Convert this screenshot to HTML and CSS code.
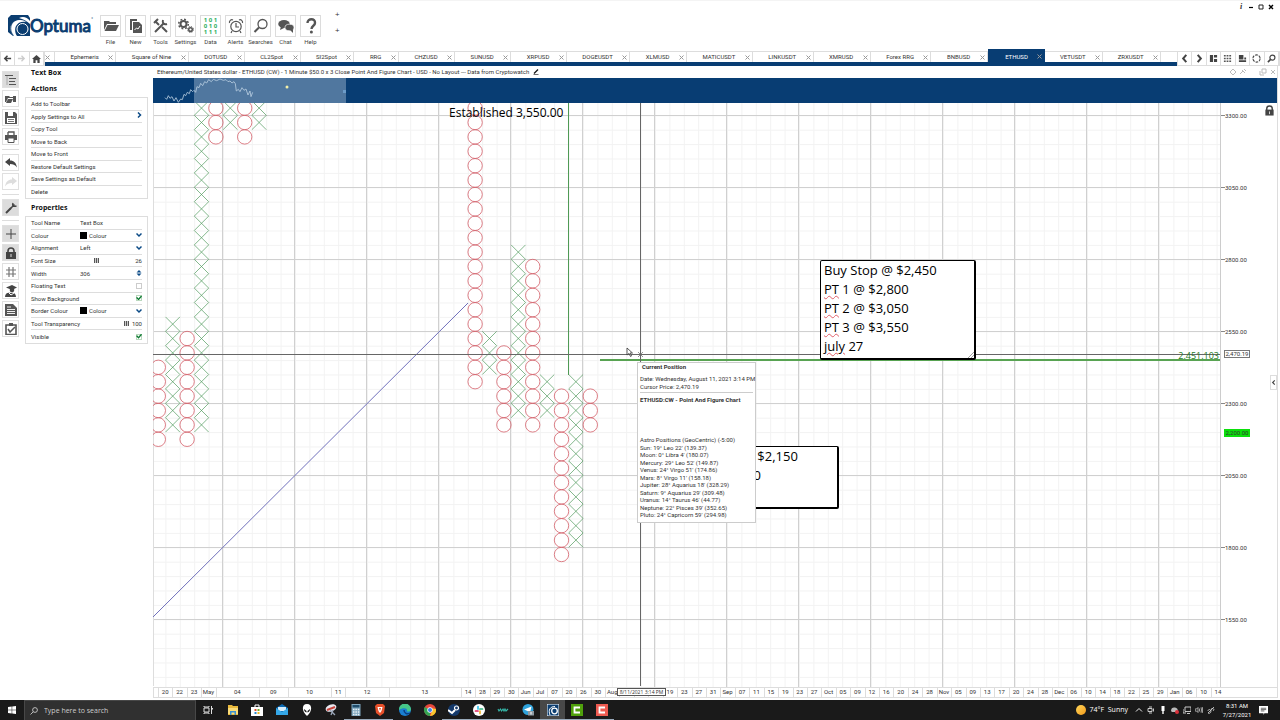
FILE: index.html
```html
<!DOCTYPE html>
<html lang="en">
<head>
    <meta charset="UTF-8">
    <meta name="viewport" content="width=device-width, initial-scale=1.0">
    <title>Optuma - ETHUSD</title>
    <link rel="stylesheet" href="styles.css">
</head>
<body>

<!-- Header -->
<header class="header">
    <div class="logo">
        <svg width="22" height="22" viewBox="0 0 22 22"><path d="M3 0h17l2 3v18H5L0 17V3z" fill="#0b3d70"/><path d="M6 21C-1 14 3 6 11 5c4-.5 6 1 8 2-5-1-9 0-11 4-1.500 3-1 7 1 10z" fill="#fff"/><path d="M11 3c4-2 8-1 11 3v3c-3-3-7-5-11-6z" fill="#fff"/><circle cx="14.500" cy="14" r="5.500" fill="#0b3d70" stroke="#fff"/><path d="M5 20c-3-4-3-9 0-13" fill="none" stroke="#0b3d70" stroke-width=".8"/></svg>
        <span class="logo-text">Optuma</span><span class="logo-mark">°</span>
    </div>
    <nav class="toolbar">
        <button class="tool"><span class="tool-icon"><svg viewBox="0 0 16 16"><path d="M1 3h5l1 1h6v2H4L1 12z"/><path d="M4.500 7H16l-3 6H1.500z"/></svg></span>File</button>
        <button class="tool"><span class="tool-icon"><svg viewBox="0 0 16 16"><path d="M2 1h7v2H4v9H2z"/><path d="M5 4h6l3 3v8H5z"/><path d="M6.500 12l2-2 1.500 1 2-3" stroke="#fff" fill="none"/></svg></span>New</button>
        <button class="tool"><span class="tool-icon"><svg viewBox="0 0 16 16" fill="none" stroke="#555" stroke-width="2"><path d="M2 14l9-9M2 3l4 4M9 9l5 5"/><path d="M1 5l4-4M10 2c-1 3 1 5 4 4"/></svg></span>Tools</button>
        <button class="tool"><span class="tool-icon"><svg viewBox="0 0 16 16" fill="none" stroke="#555"><circle cx="5.500" cy="6" r="3" stroke-width="2"/><circle cx="5.500" cy="6" r="4.800" stroke-width="1.500" stroke-dasharray="1.900 1.870"/><circle cx="12.500" cy="11.500" r="1.800" stroke-width="1.500"/><circle cx="12.500" cy="11.500" r="3" stroke-dasharray="1.200 1.150"/></svg></span>Settings</button>
        <button class="tool"><span class="tool-icon data-icon"><span>1 0 1</span><span>0 1 0</span><span>1 1 1</span></span>Data</button>
        <button class="tool"><span class="tool-icon"><svg viewBox="0 0 16 16" fill="none" stroke="#555" stroke-width="1.200"><circle cx="8" cy="8.500" r="5.200"/><path d="M8 5v4h3M1.500 5C1 3 3 1 5 2M14.500 5C15 3 13 1 11 2M4 13l-1 2M12 13l1 2"/></svg></span>Alerts</button>
        <button class="tool"><span class="tool-icon"><svg viewBox="0 0 16 16" fill="none" stroke="#555"><circle cx="9.500" cy="6" r="4.500" stroke-width="1.300"/><path d="M6 9.500L1.500 14" stroke-width="2"/></svg></span>Searches</button>
        <button class="tool"><span class="tool-icon"><svg viewBox="0 0 16 16"><ellipse cx="6" cy="6" rx="5.800" ry="4"/><path d="M3 8l-1 4 4-2z"/><ellipse cx="11.500" cy="9.500" rx="4.500" ry="3.300" stroke="#fff" stroke-width=".7"/><path d="M12 12l3 3v-4z"/></svg></span>Chat</button>
        <button class="tool"><span class="tool-icon"><svg viewBox="0 0 16 16"><path d="M4.500 5C4.500 0 12.500 0 12 5c0 3-3.500 2.500-3.500 6" fill="none" stroke="#555" stroke-width="2.400"/><circle cx="8.400" cy="14" r="1.500"/></svg></span>Help</button>
    </nav>
    <div class="quick-add"><span>+</span><span>+</span></div>
    <div class="window-buttons">
        <button aria-label="Info"><i>i</i></button>
        <button aria-label="Minimise"><svg viewBox="0 0 6 6"><path d="M1 3.500h4" stroke="#000" stroke-width="1.200"/></svg></button>
        <button aria-label="Maximise"><svg viewBox="0 0 6 6"><path d="M1 1h4v4H1z" fill="none" stroke="#222"/></svg></button>
        <button aria-label="Close"><svg viewBox="0 0 6 6"><path d="M1 1l4 4M5 1L1 5" stroke="#000" stroke-width="1.400"/></svg></button>
    </div>
</header>

<!-- Tabs -->
<div class="tab-bar">
    <div class="cells nav-cells">
        <button aria-label="Back"><svg viewBox="0 0 10 10"><path d="M9 5H2M5 2L2 5l3 3" fill="none" stroke="#444" stroke-width="1.700"/></svg></button>
        <button aria-label="Forward"><svg viewBox="0 0 10 10"><path d="M1 5h7M5 2l3 3-3 3" fill="none" stroke="#ccc" stroke-width="1.500"/></svg></button>
        <button aria-label="Home"><svg viewBox="0 0 10 10"><path d="M5 1l5 4.500H8.500V10H6V7H4v3H1.500V5.500H0z" fill="#444"/></svg></button>
    </div>
    <div class="tabs" id="tabs"></div>
    <div class="cells view-cells">
        <button aria-label="Previous"><svg viewBox="0 0 10 10"><path d="M7 1L3.500 5 7 9" fill="none" stroke="#444" stroke-width="2.200"/></svg></button>
        <button aria-label="Next"><svg viewBox="0 0 10 10"><path d="M3 1l3.500 4L3 9" fill="none" stroke="#444" stroke-width="2.200"/></svg></button>
        <button aria-label="Layout"><svg viewBox="0 0 10 10"><path d="M1 1h3.500v8H1zM5.500 1H9v3H5.500zM5.500 5.500H9V9H5.500z" fill="#444"/></svg></button>
        <button aria-label="Grid"><svg viewBox="0 0 10 10"><path d="M1 2h8M1 5h8M1 8h8" stroke="#555" stroke-width="1.800" stroke-dasharray="2 1"/></svg></button>
        <button aria-label="Save layout"><svg viewBox="0 0 10 10"><path d="M1 1h5v5H1zM1 7h8v2H1zM7 4h2v2H7z" fill="#444"/></svg></button>
        <button aria-label="Refresh"><svg viewBox="0 0 10 10"><circle cx="5" cy="5" r="4" fill="none" stroke="#444" stroke-width="1.200" stroke-dasharray="3 1.200"/></svg></button>
        <button aria-label="Search"><svg viewBox="0 0 10 10"><circle cx="6" cy="4" r="2.800" fill="none" stroke="#444" stroke-width="1.300"/><path d="M4 6L1 9" stroke="#444" stroke-width="1.800"/></svg></button>
    </div>
</div>

<main class="main">
    <!-- Icon rail -->
    <nav class="rail">
        <button class="on" aria-label="Tree"><svg viewBox="0 0 12 12"><path d="M0 1.500h8M4 4.500h7M4 7.500h6M4 10.500h7" stroke="#555" stroke-width="1.200"/><path d="M2 2v9" stroke="#999" stroke-width=".8"/></svg></button>
        <button aria-label="Open"><svg viewBox="0 0 12 12"><path d="M0 3h4l1 1h3v1H3L1 9H0zM3 6h5l-2 4H1zM8 3h3v6H8z" fill="#555"/></svg></button>
        <button aria-label="Save"><svg viewBox="0 0 12 12"><path d="M0 0h10l2 2v10H0z" fill="#555"/><path d="M3 0h5v4H3zM2 6h8v5H2z" fill="#fff"/><path d="M3 7.500h6M3 9.500h6" stroke="#777"/></svg></button>
        <button aria-label="Print"><svg viewBox="0 0 12 12"><path d="M3 1h6v4M3 5V1" fill="none" stroke="#555" stroke-width="1.300"/><path d="M0 4h12v5H0z" fill="#555"/><path d="M3 7h6v4.500H3z" fill="#fff" stroke="#555"/></svg></button>
        <span class="rail-line"></span>
        <button aria-label="Undo"><svg viewBox="0 0 12 12"><path d="M0 5l5-4v2.500c4 0 6 2 7 7-2-3-4-3.500-7-3.500V9z" fill="#444"/></svg></button>
        <button aria-label="Redo"><svg viewBox="0 0 12 12"><path d="M12 5L7 1v2.500c-4 0-6 2-7 7C2 7.500 4 7 7 7v2z" fill="#ddd"/></svg></button>
        <span class="rail-line"></span>
        <button class="on" aria-label="Properties"><svg viewBox="0 0 12 12"><path d="M1 11l5-5" stroke="#444" stroke-width="2"/><path d="M5 7l4.500-4.500M8 1c-1 3 0 4 3.500 3" fill="none" stroke="#444" stroke-width="1.500"/></svg></button>
        <span class="rail-line"></span>
        <button class="on" aria-label="Crosshair"><svg viewBox="0 0 12 12"><path d="M6 1v10M1 6h10" stroke="#444"/></svg></button>
        <button class="on" aria-label="Lock"><svg viewBox="0 0 12 12"><path d="M3 6V4c0-4 6-4 6 0v2" fill="none" stroke="#444" stroke-width="1.600"/><path d="M1 5h10v7H1z" fill="#444"/><path d="M6 7v3" stroke="#ddd"/></svg></button>
        <button aria-label="Snap to grid"><svg viewBox="0 0 12 12"><path d="M4 1v10M8 1v10M1 4h10M1 8h10" stroke="#777" stroke-width="1.200"/></svg></button>
        <button aria-label="Learning"><svg viewBox="0 0 12 12"><path d="M1 2.500L7 0l5 2.500L7 5z" fill="#444"/><circle cx="7" cy="5" r="2.300" fill="#444"/><path d="M0 12c0-4 3-5 6-4 3-1 5 1 5 4z" fill="#444"/><path d="M4 8l2 2 3-2" fill="none" stroke="#fff"/></svg></button>
        <button aria-label="Notes"><svg viewBox="0 0 12 12"><path d="M0 0h8l4 4v8H0z" fill="#555"/><path d="M2 3h4M2 5.500h8M2 7.500h8M2 9.500h8" stroke="#fff" stroke-width=".9"/></svg></button>
        <button aria-label="Checklist"><svg viewBox="0 0 12 12"><path d="M1 2h10v9.500H1z" fill="none" stroke="#555" stroke-width="1.600"/><path d="M4 0h4v3H4z" fill="#555"/><path d="M3 6l2 3 5-5" fill="none" stroke="#555" stroke-width="1.500"/></svg></button>
    </nav>

    <!-- Tool properties -->
    <aside class="side">
        <h2>Text Box</h2>
        <h2>Actions</h2>
        <ul class="box actions">
            <li><button>Add to Toolbar</button></li>
            <li><button>Apply Settings to All <svg class="mini" viewBox="0 0 6 6"><path d="M2 .5L4.500 3 2 5.500" fill="none" stroke="#0b4a86" stroke-width="1.500"/></svg></button></li>
            <li><button>Copy Tool</button></li>
            <li><button>Move to Back</button></li>
            <li><button>Move to Front</button></li>
            <li><button>Restore Default Settings</button></li>
            <li><button>Save Settings as Default</button></li>
            <li><button>Delete</button></li>
        </ul>
        <h2>Properties</h2>
        <div class="box props">
            <div class="prop"><label for="toolName">Tool Name</label><input id="toolName" type="text" value="Text Box"></div>
            <div class="prop"><label for="colour">Colour</label><span class="swatch"></span><select id="colour"><option>Colour</option></select><svg class="mini" viewBox="0 0 6 6"><path d="M.5 1.500L3 4l2.500-2.500" fill="none" stroke="#0b4a86" stroke-width="1.500"/></svg></div>
            <div class="prop"><label for="align">Alignment</label><select id="align"><option>Left</option><option>Right</option></select><svg class="mini" viewBox="0 0 6 6"><path d="M.5 1.500L3 4l2.500-2.500" fill="none" stroke="#0b4a86" stroke-width="1.500"/></svg></div>
            <div class="prop"><label for="fontSize">Font Size</label><input id="fontSize" type="range" min="1" max="80" value="26"><output>26</output></div>
            <div class="prop"><label for="width">Width</label><input id="width" type="text" value="306"><svg class="mini" viewBox="0 0 6 6"><path d="M.5 2.500L3 0l2.500 2.500zM.5 3.500L3 6l2.500-2.500z" fill="#0b4a86"/></svg></div>
            <div class="prop"><label for="floating">Floating Text</label><input id="floating" type="checkbox"></div>
            <div class="prop"><label for="background">Show Background</label><input id="background" type="checkbox" checked></div>
            <div class="prop"><label for="border">Border Colour</label><span class="swatch"></span><select id="border"><option>Colour</option></select><svg class="mini" viewBox="0 0 6 6"><path d="M.5 1.500L3 4l2.500-2.500" fill="none" stroke="#0b4a86" stroke-width="1.500"/></svg></div>
            <div class="prop"><label for="transparency">Tool Transparency</label><input id="transparency" type="range" min="0" max="100" value="100"><output>100</output></div>
            <div class="prop"><label for="visible">Visible</label><input id="visible" type="checkbox" checked></div>
        </div>
    </aside>

    <!-- Chart -->
    <section class="panel">
        <div class="panel-title">
            <span>Ethereum/United States dollar - ETHUSD (CW) - 1 Minute $50.0 x 3 Close Point And Figure Chart - USD - No Layout --- Data from Cryptowatch</span>
            <svg class="mini" viewBox="0 0 6 6"><path d="M.5 5.500h5" stroke="#333" stroke-width=".7"/><path d="M1 4.500L5 .5" stroke="#111" stroke-width="1.300"/></svg>
            <div class="panel-buttons">
                <svg viewBox="0 0 8 8"><path d="M4 1l3 3-3 3-3-3z"/></svg>
                <svg viewBox="0 0 8 8"><path d="M1 6l3-3M3 2l3 3M5 1l2 2"/></svg>
                <span></span>
                <svg viewBox="0 0 8 8"><path d="M3 1h4v4H3zM1 3v4h4"/></svg>
                <svg viewBox="0 0 8 8"><path d="M2 2l4 4M6 2L2 6"/></svg>
            </div>
        </div>
        <div class="overview">
            <svg width="100%" height="100%">
                <rect x="41" width="152" height="25" fill="#50779f"/>
                <g transform="translate(-3 -3) scale(.3333)">
                    <polyline fill="none" stroke="#b7cce0" stroke-width="2.500" points="45,68 50,73 55,62 60,70 66,65 72,78 78,68 85,82 92,72 97,74 102,58 107,62 112,52 118,56 122,44 128,50 132,46 137,52 141,35 147,38 152,25 158,32 164,20 170,24 176,14 184,20 190,13 200,17 210,12 220,16 228,14 234,20 240,18 246,24 252,20 256,26 259,48 265,43 270,50 276,38 282,46 288,42 294,60 300,48 303,65 308,52"/>
                </g>
                <circle cx="134" cy="9" r="1.500" fill="#f3f0a8"/>
                <path d="M190 12h3v3h-3z" fill="#6d9cc8"/>
            </svg>
        </div>
        <div class="plot-row">
            <div class="plot">
                <svg class="marks" width="100%" height="100%">
                    <defs>
                        <pattern id="minor" x="-2" y="-2.100" width="14.400" height="14.400" patternUnits="userSpaceOnUse"><path d="M0 .5h14.400M.5 0v14.400" stroke="#f2f2f2" fill="none"/></pattern>
                        <pattern id="major" x="69" y="12" width="72" height="72" patternUnits="userSpaceOnUse"><path d="M0 .5h72M.5 0v72" stroke="#d0d0d0" fill="none"/></pattern>
                    </defs>
                    <rect width="100%" height="100%" fill="url(#minor)"/>
                    <rect width="100%" height="100%" fill="url(#major)"/>
                    <path d="M.5 0v583" stroke="#ddd"/>
                    <g id="marks"></g>
                    <path d="M415.500 0v272" stroke="#4f9a55"/>
                    <path d="M0 514L315 200" stroke="#7070bb"/>
                    <path d="M447 257H1068" stroke="#58a352" stroke-width="2"/>
                    <path d="M0 251.500H1068M487.500 0v583" stroke="#666"/>
                </svg>
                <p class="established">Established 3,550.00</p>
                <p class="level">2.451.103</p>
                <div class="note buy" contenteditable="true" spellcheck="false"><div>Buy Stop @ $2,450</div><div><u>PT</u> 1 @ $2,800</div><div><u>PT</u> 2 @ $3,050</div><div><u>PT</u> 3 @ $3,550</div><div><u>july</u> 27</div><svg class="grip" viewBox="0 0 6 6"><path d="M0 6l6-6M3 6l3-3" stroke="#888" stroke-width=".8"/></svg></div>
                <div class="note sell" contenteditable="true" spellcheck="false"><div>Sell Stop @ $2,150</div><div>PT @ $1,800</div></div>
                <div class="tip">
                    <h3>Current Position</h3>
                    <p>Date: Wednesday, August 11, 2021 3:14 PM</p>
                    <p>Cursor Price: 2,470.19</p>
                    <hr>
                    <h4>ETHUSD:CW - Point And Figure Chart</h4>
                    <ul>
                        <li>Astro Positions (GeoCentric) (-5:00)</li>
                        <li>Sun: 19° Leo 22' (139.37)</li>
                        <li>Moon: 0° Libra 4' (180.07)</li>
                        <li>Mercury: 29° Leo 52' (149.87)</li>
                        <li>Venus: 24° Virgo 51' (174.86)</li>
                        <li>Mars: 8° Virgo 11' (158.18)</li>
                        <li>Jupiter: 28° Aquarius 18' (328.29)</li>
                        <li>Saturn: 9° Aquarius 29' (309.48)</li>
                        <li>Uranus: 14° Taurus 46' (44.77)</li>
                        <li>Neptune: 22° Pisces 39' (352.65)</li>
                        <li>Pluto: 24° Capricorn 59' (294.98)</li>
                    </ul>
                </div>
                <svg class="pointer" viewBox="0 0 18 12"><path d="M1 1v7l2-1.500L4.500 9.500l1-.5L4 6h2.500z" fill="#fff" stroke="#333" stroke-width=".8"/><path d="M12 5l5 5M17 5l-5 5" stroke="#666" stroke-width=".7"/></svg>
            </div>
            <div class="price-axis">
                <span>3300.00</span><span>3050.00</span><span>2800.00</span><span>2550.00</span><span>2300.00</span><span>2050.00</span><span>1800.00</span><span>1550.00</span>
                <b class="price-tag">2,470.19</b>
                <b class="price-tag last">2,200.00</b>
                <svg class="axis-lock" viewBox="0 0 12 12"><path d="M3 6V4c0-4 6-4 6 0v2" fill="none" stroke="#444" stroke-width="1.600"/><path d="M1.500 5h9v6.500h-9z" fill="#444"/><path d="M6 7v3" stroke="#ddd"/></svg>
                <button class="expand" aria-label="Expand"><svg viewBox="0 0 6 6"><path d="M4.500 .5L2 3l2.500 2.500" fill="none" stroke="#444" stroke-width="1.400"/></svg></button>
            </div>
        </div>
        <div class="date-axis" id="dates">
            <b class="date-tag">8/11/2021 3:14 PM</b>
        </div>
    </section>
</main>

<!-- Windows taskbar -->
<footer class="taskbar">
    <button class="start" aria-label="Start"><svg viewBox="0 0 8 8"><path d="M0 1l3.700-.5v3.200H0zM4.200.4L8 0v3.700H4.200zM0 4.200h3.700v3.300L0 7zM4.200 4.200H8V8l-3.800-.5z" fill="#fff"/></svg></button>
    <label class="search"><svg viewBox="0 0 8 8"><circle cx="5" cy="3" r="2.400" fill="none" stroke="#ddd" stroke-width=".8"/><path d="M3.200 4.800L.5 7.500" stroke="#ddd" stroke-width=".8"/></svg><input type="text" placeholder="Type here to search" aria-label="Type here to search"></label>
    <div class="apps">
        <button aria-label="Task view"><svg viewBox="0 0 12 12"><path d="M2 4h5v4H2zM2 2v1h5V2M2 10V9h5v1M9.500 2v8" fill="none" stroke="#ddd"/><path d="M9 4h2v1.500H9z" fill="#ddd"/></svg></button>
        <button aria-label="Explorer"><svg viewBox="0 0 12 12"><path d="M1 1h4l1 1h5v9H1z" fill="#e9b93c"/><path d="M1 4h10v6H1z" fill="#fbdc78"/><path d="M3 11V7h6v4H7.500V8.500h-3V11z" fill="#3a8fd0"/></svg></button>
        <button aria-label="Store"><svg viewBox="0 0 12 12"><path d="M4 3V1h4v2" fill="none" stroke="#fff"/><path d="M0 3h12v9H0z" fill="#fff"/><path d="M3.500 5h2v2h-2z" fill="#e2512c"/><path d="M6.500 5h2v2h-2z" fill="#6fae2c"/><path d="M3.500 8h2v2h-2z" fill="#2a8bd0"/><path d="M6.500 8h2v2h-2z" fill="#f0b422"/></svg></button>
        <button aria-label="Mail"><svg viewBox="0 0 12 12"><path d="M0 4l6-4 6 4v7H0z" fill="#0c6bb5"/><path d="M2 3h8v4H2z" fill="#d8eefc"/><path d="M0 4l6 4 6-4v7H0z" fill="#34a7e8"/></svg></button>
        <button aria-label="Alienware"><svg viewBox="0 0 12 12"><path d="M6 0c6 0 5 8 0 12C1 8 0 0 6 0z" fill="#fff"/><path d="M3 5l2.500 2v1.500C4 8 3 7 3 5zM9 5L6.500 7v1.500C8 8 9 7 9 5z" fill="#111"/></svg></button>
        <button aria-label="Snip"><svg viewBox="0 0 12 12"><ellipse cx="6" cy="4" rx="5.500" ry="3.500" fill="#e8e8f0" transform="rotate(-20 6 4)"/><path d="M2 6l8-3" stroke="#c9443c" stroke-width="2"/><path d="M5 6l5 5M8 6l-2 5" stroke="#9aa6b8" stroke-width="1.300"/></svg></button>
        <button class="open" aria-label="Calculator"><svg viewBox="0 0 12 12"><path d="M1.500 0h9v12h-9z" fill="#7fa6be"/><path d="M2.500 1h7v2.500h-7z" fill="#1f4c6b"/><path d="M3 5.500h6.500M3 8h6.500M3 10.500h6.500" stroke="#eaf3f8" stroke-width="1.300" stroke-dasharray="1.500 .9"/></svg></button>
        <button class="open" aria-label="Brave"><svg viewBox="0 0 12 12"><path d="M3 0h6l2 2-1 7-4 3-4-3-1-7z" fill="#e8502a"/><path d="M3.500 3h5L7.500 7 6 9 4.500 7z" fill="#fff"/><path d="M5 4h2L6 7z" fill="#e8502a"/></svg></button>
        <button aria-label="Edge"><svg viewBox="0 0 12 12"><circle cx="6" cy="6" r="6" fill="#1a7fd0"/><path d="M0 6a6 6 0 0 1 12-1c0 3-4 3-4 2 1-3-4-4-8-1z" fill="#46c78a"/><path d="M5 6c0 3 3 5 6 3" fill="none" stroke="#0b3f80" stroke-width="1.500"/></svg></button>
        <button aria-label="Chrome"><svg viewBox="0 0 12 12"><circle cx="6" cy="6" r="6" fill="#e9473a"/><path d="M.8 3L6 6v6A6 6 0 0 1 .8 3z" fill="#33a352"/><path d="M12 5a6 6 0 0 1-6 7l2.500-5.500L6 4z" fill="#f8c62c"/><circle cx="6" cy="6" r="2.700" fill="#fff"/><circle cx="6" cy="6" r="2" fill="#3f7fe8"/></svg></button>
        <button class="open" aria-label="Steam"><svg viewBox="0 0 12 12"><circle cx="6" cy="6" r="6" fill="#14396b"/><circle cx="8.500" cy="4" r="2" fill="none" stroke="#fff" stroke-width="1.200"/><path d="M0 6l4 3 3-3" fill="none" stroke="#fff" stroke-width="2"/></svg></button>
        <button class="open" aria-label="Slack"><svg viewBox="0 0 12 12"><circle cx="6" cy="6" r="6" fill="#fff"/><g stroke-width="1.700" stroke-linecap="round"><path d="M5 2.500V5" stroke="#36c5f0"/><path d="M7 5h2.500" stroke="#2eb67d"/><path d="M7 7v2.500" stroke="#ecb22e"/><path d="M5 7H2.500" stroke="#e01e5a"/></g></svg></button>
        <button class="open" aria-label="Waves"><svg viewBox="0 0 12 12"><path d="M1 5l1 2 1.500-2 1 2L6 5l1 2 1-2 1 2 2-2" fill="none" stroke="#35b7a9" stroke-width="1.100"/></svg></button>
        <button class="open" aria-label="Telegram"><svg viewBox="0 0 12 12"><circle cx="6" cy="5.500" r="5.500" fill="#2fa3dc"/><path d="M2 5.500L9.500 2.500 8 9 5.500 7z" fill="#fff"/><path d="M6 7h6v4.500H6z" fill="#8e9aa3"/><path d="M9 8v2.500" stroke="#fff"/></svg></button>
        <button class="open active" aria-label="Optuma"><svg viewBox="0 0 12 12"><path d="M0 0h12v12H0z" fill="#0b3d70" stroke="#fff"/><circle cx="7.500" cy="7" r="2.800" fill="none" stroke="#fff" stroke-width="1.300"/><path d="M3 11C1 6 3 2.500 8 2.500" fill="none" stroke="#fff"/></svg></button>
        <button class="open" aria-label="Camtasia"><svg viewBox="0 0 12 12"><path d="M0 0h12v12H0z" fill="#4fa00c"/><path d="M9 3.500H3.500v5H9" fill="none" stroke="#fff" stroke-width="1.800"/></svg></button>
        <button class="open" aria-label="Recorder"><svg viewBox="0 0 12 12"><path d="M0 0h12v12H0z" fill="#ee5a50"/><path d="M9 3.500H3.500v5H9" fill="none" stroke="#fff" stroke-width="1.800"/></svg></button>
    </div>
    <div class="tray">
        <span class="sun"></span>
        <span class="weather">74°F&nbsp; Sunny</span>
        <svg viewBox="0 0 8 8"><path d="M1 5.500L4 2.500l3 3" fill="none" stroke="#eee"/></svg>
        <svg viewBox="0 0 8 8"><path d="M1 2.500h4v3H1zM2 1h3M2 7h3M6.500 2.500v3" fill="none" stroke="#ddd" stroke-width=".9"/></svg>
        <svg viewBox="0 0 8 8"><path d="M2.500 0h3v5h-3z" fill="#fff"/><path d="M4 5v3" stroke="#fff" stroke-width="1.400"/></svg>
        <svg viewBox="0 0 8 8"><path d="M0 5c0-3 2-4 4-3.500S7 3 7 6H1z" fill="#bbb"/><circle cx="6" cy="6" r="2" fill="#d9303a"/></svg>
        <svg viewBox="0 0 8 8"><path d="M2 1h6v4.500H2zM0 3v4h3M4 7.500h3" fill="none" stroke="#ddd" stroke-width=".9"/></svg>
        <svg viewBox="0 0 8 8"><path d="M0 3h1.500L3 1.500v5L1.500 5H0zM4.500 2.500v3M6 1.500q1 2.500 0 5M7.200 1q1 3 0 6" fill="none" stroke="#ddd" stroke-width=".7"/></svg>
        <svg viewBox="0 0 8 8"><path d="M1 7l6-6M1 5c0-2 3-2 3 0S2 8 1 7M4 3c2-1 4 0 2 2" fill="none" stroke="#ddd" stroke-width=".8"/></svg>
        <span class="clock">8:31 AM<br>7/27/2021</span>
        <svg class="notify" viewBox="0 0 10 10"><path d="M0 0h10v8H6L5 10V8H0z" fill="#fff"/><path d="M2 2.500h6M2 4h6M2 5.500h4" stroke="#333" stroke-width=".8"/></svg>
    </div>
</footer>

<script src="script.js"></script>
</body>
</html>
```
FILE: styles.css
```css
* {
    box-sizing: border-box;
}

body {
    margin: 0;
    height: 100vh;
    display: flex;
    flex-direction: column;
    background: #fff;
    color: #333;
    font: 6px/8px Roboto, "Open Sans", sans-serif;
    overflow: hidden;
}

button, input, select {
    font: inherit;
    color: inherit;
    border: none;
    background: none;
    padding: 0;
    margin: 0;
}

h2, h3, h4, p, ul {
    margin: 0;
    padding: 0;
    list-style: none;
}

svg {
    display: block;
    flex: none;
}

.mini {
    width: 6px;
    height: 6px;
}

/* Header */
.header {
    display: flex;
    flex: none;
    height: 49px;
    padding: 14px 4px 0 8px;
    border-top: 1px solid #f4f4f4;
}

.logo {
    display: flex;
    width: 90px;
    height: 22px;
    color: #0b3d70;
}

.logo-text {
    font: 17px/22px Lato, sans-serif;
    -webkit-text-stroke: 1px #0b3d70;
}

.logo-mark {
    font-size: 6px;
}

.toolbar {
    display: flex;
}

.tool {
    width: 25px;
    display: flex;
    flex-direction: column;
    align-items: center;
    gap: 1px;
    color: #444;
}

.tool-icon {
    width: 21px;
    height: 22px;
    display: flex;
    align-items: center;
    justify-content: center;
    border: 1px solid #dcdcdc;
}

.tool-icon svg {
    width: 16px;
    height: 16px;
    fill: #555;
}

.tool-icon svg[fill="none"] {
    fill: none;
}

.data-icon {
    flex-direction: column;
    font: bold 6px/6px "Open Sans", sans-serif;
    color: #2fae60;
}

.quick-add {
    display: flex;
    flex-direction: column;
    gap: 8px;
    margin: -5px 0 0 12px;
    font: 8px/8px "Open Sans", sans-serif;
}

.window-buttons {
    display: flex;
    margin: -12px 0 0 auto;
    height: 8px;
}

.window-buttons button {
    width: 10px;
    display: flex;
    justify-content: center;
    align-items: center;
    font: bold 8px/8px "Liberation Serif", serif;
}

.window-buttons svg {
    width: 6px;
    height: 6px;
}

/* Tabs */
.tab-bar {
    display: flex;
    flex: none;
    height: 17px;
    align-items: flex-end;
}

.cells {
    display: flex;
    height: 15px;
    border: 1px solid #ddd;
}

.cells button {
    flex: 1;
    display: flex;
    align-items: center;
    justify-content: center;
    border-right: 1px solid #ddd;
}

.cells svg {
    width: 9px;
    height: 9px;
}

.nav-cells {
    width: 45px;
}

.view-cells {
    width: 103px;
}

.tabs {
    flex: 1;
    display: flex;
    height: 17px;
    padding-right: 16px;
    border-bottom: 4px solid #083d73;
    background: linear-gradient(#ddd, #ddd) 0 2px / 100% 1px no-repeat;
}

.tab {
    display: flex;
    flex: 1 1 auto;
    margin-top: 3px;
    padding: 0 2px 0 12px;
    line-height: 10px;
    align-items: center;
    justify-content: space-between;
    border-right: 1px solid #ddd;
}

.tab:first-child {
    flex: none;
    width: 10px;
    padding-left: 0;
}

.tab span {
    flex: 1;
    text-align: center;
}

.tab svg {
    width: 5px;
    height: 5px;
    margin-left: 6px;
    stroke: #999;
}

.tab:first-child svg {
    margin-left: 0;
}

.tab.current {
    margin-top: 0;
    padding: 2px 3px 0 14px;
    background: #083d73;
    color: #fff;
    border: none;
}

.tab.current ~ .tab {
    padding-left: 11px;
}

/* Main area */
.main {
    flex: 1;
    min-height: 0;
    display: flex;
}

.rail {
    width: 25px;
    padding: 5px 0 0 2px;
    display: flex;
    flex-direction: column;
    gap: 2px;
}

.rail button {
    width: 17px;
    height: 17px;
    display: flex;
    align-items: center;
    justify-content: center;
    border: 1px solid #e0e0e0;
}

.rail .on {
    background: #dcdcdc;
}

.rail svg {
    width: 12px;
    height: 12px;
}

.rail-line {
    width: 17px;
    height: 5px;
    background: linear-gradient(#ddd, #ddd) 0 2px / 100% 1px no-repeat;
}

.side {
    width: 123px;
    padding-top: 2px;
}

.side h2 {
    padding-left: 6px;
    font: bold 7px/10px "Open Sans", sans-serif;
    margin-bottom: 6px;
    color: #111;
}

.side h2 + .box {
    margin-top: -3px;
}

.box {
    padding: 0 5px;
    border: 1px solid #ddd;
    display: grid;
}

.actions {
    height: 102px;
    grid-template-rows: repeat(8, 1fr);
    margin-bottom: 4px;
}

.props {
    height: 128px;
    grid-template-rows: repeat(10, 1fr);
}

.box li, .prop {
    display: flex;
    align-items: center;
    line-height: 9px;
    border-bottom: 1px solid #ddd;
}

.box li:last-child, .prop:last-child {
    border-bottom: none;
}

.actions button {
    flex: 1;
    display: flex;
    justify-content: space-between;
}

.prop label {
    width: 49px;
    white-space: nowrap;
}

.prop input[type=text], .prop select {
    flex: 1;
    min-width: 0;
    width: 0;
    height: 9px;
    appearance: none;
}

.prop input[type=checkbox] {
    appearance: none;
    width: 6px;
    height: 6px;
    margin-left: auto;
    border: 1px solid #ccc;
}

.prop input[type=checkbox]:checked {
    border-color: #b9d8bd;
}

.prop input[type=checkbox]:checked::before {
    content: "";
    display: block;
    width: 6px;
    height: 5px;
    margin: -1px;
    background: #0e7a32;
    clip-path: polygon(0 45%, 20% 30%, 40% 60%, 85% 0, 100% 20%, 42% 100%);
}

.prop input[type=range] {
    appearance: none;
    width: 49px;
    height: 6px;
}

.prop input[type=range]::-webkit-slider-thumb {
    appearance: none;
    width: 5px;
    height: 5px;
    background: repeating-linear-gradient(90deg, #555 0 1px, #ccc 1px 2px);
}

.prop output {
    margin-left: auto;
}

.swatch {
    width: 7px;
    height: 7px;
    margin-right: 2px;
    background: #000;
}

/* Chart panel */
.panel {
    flex: 1;
    min-width: 0;
    margin: 0 2px 2px 5px;
    display: flex;
    flex-direction: column;
    border-right: 1px solid #ddd;
}

.panel-title {
    display: flex;
    flex: none;
    height: 12px;
    align-items: center;
    gap: 4px;
    padding-left: 4px;
}

.panel-buttons {
    display: flex;
    gap: 2px;
    margin-left: auto;
}

.panel-buttons svg, .panel-buttons span {
    width: 8px;
    height: 8px;
    fill: none;
    stroke: #bbb;
}

.overview {
    flex: none;
    height: 25px;
    background: #083d73;
}

.plot-row {
    flex: 1;
    min-height: 0;
    display: flex;
}

.plot {
    position: relative;
    flex: 1;
    overflow: hidden;
    border-right: 1px solid #ccc;
}

.marks {
    position: absolute;
    inset: 0;
}

.established {
    position: absolute;
    left: 296px;
    top: 1px;
    font: 12px/18px "Open Sans", sans-serif;
    color: #000;
}

.level {
    position: absolute;
    right: 1px;
    top: 247px;
    font: 9px/12px "Open Sans", sans-serif;
    color: #1f7a1f;
}

.note {
    position: absolute;
    width: 156px;
    padding: 0 3px;
    background: #fff;
    border: 1px solid #000;
    border-width: 1px 2px 2px 1px;
    border-radius: 2px;
    font: 13px/19px "Open Sans", sans-serif;
    color: #000;
}

.note u {
    text-decoration: underline wavy #e0606a 1px;
    text-underline-offset: 1px;
}

.buy {
    left: 667px;
    top: 157px;
    height: 100px;
}

.sell {
    left: 530px;
    top: 343px;
    height: 63px;
}

.grip {
    position: absolute;
    right: 0;
    bottom: 0;
    width: 6px;
    height: 6px;
}

.tip {
    position: absolute;
    left: 484px;
    top: 259px;
    width: 119px;
    height: 161px;
    padding: 0 2px;
    background: #fff;
    border: 1px solid #ccc;
    white-space: nowrap;
}

.tip h3 {
    font-size: 6px;
    padding-left: 2px;
    margin-bottom: 4px;
}

.tip hr {
    margin: 1px 0 3px;
    border: none;
    border-top: 1px solid #ccc;
}

.tip h4 {
    font-size: 6px;
    margin-bottom: 32px;
}

.tip ul {
    height: 83px;
    display: grid;
    grid-template-rows: repeat(11, minmax(0, 1fr));
    line-height: 7px;
}

.pointer {
    position: absolute;
    left: 473px;
    top: 244px;
    width: 18px;
    height: 12px;
}

.price-axis {
    position: relative;
    width: 56px;
    display: flex;
    flex-direction: column;
    overflow: hidden;
}

.price-axis span {
    flex: none;
    height: 72px;
    line-height: 73px;
    padding-left: 4px;
    background: linear-gradient(#888, #888) 0 36px / 4px 1px no-repeat;
}

.price-axis span:first-child {
    margin-top: -24px;
}

.price-tag {
    position: absolute;
    left: 3px;
    top: 247px;
    width: 26px;
    font-weight: normal;
    text-align: center;
    border: 1px solid #777;
    background: #fff;
    line-height: 6px;
}

.price-tag.last {
    top: 326px;
    border-color: #0be00b;
    background: #0be00b;
}

.axis-lock {
    position: absolute;
    right: 2px;
    top: 2px;
    width: 11px;
    height: 11px;
}

.expand {
    position: absolute;
    right: 0;
    top: 272px;
    width: 7px;
    height: 15px;
    border: 1px solid #ddd;
}

.expand svg {
    width: 5px;
    height: 5px;
}

.date-axis {
    position: relative;
    flex: none;
    height: 11px;
    display: flex;
    padding-right: 52px;
    padding-left: 4px;
    border: 1px solid #ddd;
    border-right: none;
}

.date-axis span {
    flex: 1 1 0;
    min-width: 0;
    text-align: center;
    background: linear-gradient(#ddd, #ddd) 0 0 / 1px 100% no-repeat;
    white-space: nowrap;
}

.date-tag {
    position: absolute;
    left: 463px;
    top: 0;
    width: 49px;
    text-align: center;
    border: 1px solid #555;
    background: #fff;
    font: 5px/6px "Open Sans", sans-serif;
    white-space: nowrap;
}

/* Taskbar */
.taskbar {
    flex: none;
    height: 20px;
    display: flex;
    background: #1a1a1a;
    color: #fff;
}

.start {
    width: 24px;
    display: flex;
    align-items: center;
    justify-content: center;
}

.start svg {
    width: 8px;
    height: 8px;
}

.search {
    width: 172px;
    display: flex;
    align-items: center;
    gap: 6px;
    padding-left: 5px;
    background: #303030;
    border: 1px solid #484848;
    border-bottom: none;
}

.search svg {
    width: 8px;
    height: 8px;
}

.search input {
    font: 7px/10px "Open Sans", sans-serif;
}

.search input::placeholder {
    color: #ccc;
}

.apps {
    width: 418px;
    display: flex;
}

.apps button {
    flex: 1;
    display: flex;
    align-items: center;
    justify-content: center;
    border-bottom: 1px solid transparent;
}

.apps .open {
    border-bottom-color: #9ab;
    background-clip: padding-box;
}

.apps .active {
    background: #484848;
}

.apps svg {
    width: 12px;
    height: 12px;
}

.tray {
    display: flex;
    align-items: center;
    gap: 4px;
    margin-left: auto;
    padding-right: 12px;
}

.tray svg {
    width: 8px;
    height: 8px;
}

.tray .notify {
    width: 9px;
    height: 9px;
}

.sun {
    width: 10px;
    height: 10px;
    border-radius: 50%;
    background: linear-gradient(135deg, #ffd75a, #f39a1b);
}

.weather {
    font: 7px/10px "Open Sans", sans-serif;
    margin-right: 3px;
}

.clock {
    width: 36px;
    text-align: center;
    line-height: 9px;
}
```
FILE: script.js
```js
// Open workspaces
const tabs = ['', 'Ephemeris', 'Square of Nine', 'DOTUSD', 'CL2Spot', 'SI2Spot', 'RRG', 'CHZUSD', 'SUNUSD', 'XRPUSD',
    'DOGEUSDT', 'XLMUSD', 'MATICUSDT', 'LINKUSDT', 'XMRUSD', 'Forex RRG', 'BNBUSD', 'ETHUSD', 'VETUSDT', 'ZRXUSDT'];

document.getElementById('tabs').innerHTML = tabs.map(name =>
    `<div class="tab${name === 'ETHUSD' ? ' current' : ''}">${name ? `<span>${name}</span>` : ''}<svg viewBox="0 0 5 5"><path d="M.5 .5l4 4M4.500 .5l-4 4"/></svg></div>`
).join('');

// Point and figure columns: [column, type, first box, last box]
const columns = [
    [0, 'O', 17, 22], [1, 'X', 14, 21], [2, 'O', 15, 22], [3, 'X', -1, 21],
    [4, 'O', -1, 1], [5, 'X', -1, 0], [6, 'O', -1, 1], [7, 'X', -1, 0],
    [22, 'O', -1, 18], [23, 'X', 15, 17], [24, 'O', 16, 21], [25, 'X', 9, 20],
    [26, 'O', 10, 21], [27, 'X', 18, 20], [28, 'O', 19, 30], [29, 'X', 18, 29],
    [30, 'O', 19, 21]
];
const box = 14.4;
let marks = '';
for (const [col, type, first, last] of columns) {
    const x = 5.3 + col * box;
    for (let n = first; n <= last; n++) {
        const y = 19.5 + n * box;
        if (type === 'O') {
            marks += `<circle cx="${x}" cy="${y}" r="7.2" fill="none" stroke="#d4606a" stroke-width=".8"/>`;
        } else {
            marks += `<path d="M${x - 7.2} ${y - 7.2}l14.4 14.4m0-14.4l-14.4 14.4" stroke="#4f9a5b" stroke-width=".7"/>`;
        }
    }
}
document.getElementById('marks').innerHTML = marks;

// Date axis: [label, boxes covered]. The three empty ones sit behind the cursor date
const dates = [['20', 1], ['22', 1], ['23', 1], ['May', 1], ['04', 3], ['09', 2], ['10', 3], ['11', 1], ['12', 3], ['13', 5]];
'14,28,29,30,Jun,Jul,07,20,26,30,Aug,,,,19,23,27,31,Sep,07,11,15,19,23,27,Oct,05,09,12,16,20,24,28,Nov,05,09,13,17,20,24,28,Dec,06,10,14,18,22,25,29,Jan,06,10,14'
    .split(',').forEach(d => dates.push([d, 1]));
document.getElementById('dates').insertAdjacentHTML('afterbegin',
    dates.map(([label, size]) => `<span style="flex-grow: ${size}">${label}</span>`).join(''));
```
